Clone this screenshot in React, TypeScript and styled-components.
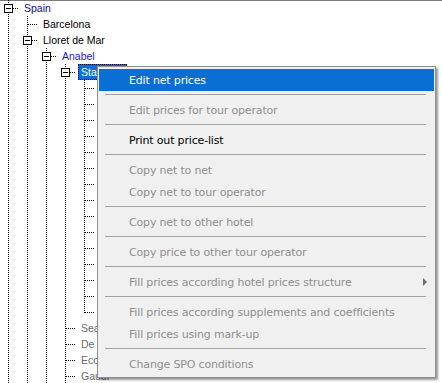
import React from 'react';
import styled, { createGlobalStyle, css } from 'styled-components';

const GlobalStyle = createGlobalStyle`
  html, body {
    margin: 0;
    padding: 0;
    background: #fff;
    overflow: hidden;
  }
`;

const Screen = styled.div`
  position: relative;
  width: 442px;
  height: 383px;
  overflow: hidden;
  background: #fff;
  box-shadow: inset 0 1px 0 #7a7a7a;
  font-family: "Liberation Sans", Arial, sans-serif;
`;

const Tree = styled.div`
  display: flex;
  flex-direction: column;
`;

const Row = styled.div`
  display: flex;
  align-items: center;
  height: 16px;
`;

const dots = (dir: 'bottom' | 'right') =>
  `repeating-linear-gradient(to ${dir}, #000 0 1px, transparent 1px 2px)`;

const Guide = styled.div<{ $line: boolean }>`
  flex: none;
  width: 19px;
  height: 16px;
  ${p => p.$line && css`
    background: ${dots('bottom')} 8px 0 / 1px 16px no-repeat;
  `}
`;

const Joint = styled.div<{ $last: boolean; $box: boolean }>`
  flex: none;
  width: 19px;
  height: 16px;
  display: flex;
  align-items: center;
  padding-left: 4px;
  box-sizing: border-box;
  background:
    ${dots('bottom')} 8px 0 / 1px ${p => (p.$last ? '9px' : '16px')} no-repeat,
    ${dots('right')} ${p => (p.$box ? '13px' : '9px')} 8px / ${p => (p.$box ? '6px' : '10px')} 1px no-repeat;
`;

const Toggle = styled.span`
  width: 9px;
  height: 9px;
  box-sizing: border-box;
  border: 1px solid #000;
  background: #fff;
  display: flex;
  align-items: center;
  justify-content: center;
  margin-top: 1px;

  &::after {
    content: '';
    width: 5px;
    height: 1px;
    background: #000;
  }
`;

const tones = {
  navy: '#10107e',
  blue: '#1c1cd2',
  black: '#000',
  gray: '#6a6a6a',
};

const Label = styled.span<{ $tone: keyof typeof tones; $selected?: boolean }>`
  margin-left: 2px;
  padding: 0 2px;
  height: 16px;
  line-height: 15px;
  box-sizing: border-box;
  font-size: 10.5px;
  white-space: nowrap;
  color: ${p => tones[p.$tone]};
  border: 1px solid transparent;
  ${p => p.$selected && css`
    background: #0a6fd4;
    color: #fff;
    border: 1px dotted #000;
  `}
`;

const Menu = styled.div`
  position: absolute;
  left: 97px;
  top: 66px;
  width: 339px;
  box-sizing: border-box;
  background: #f0f0f0;
  border: 1px solid #8e8e8e;
  padding: 2px 1px;
  box-shadow: 2px 2px 2px rgba(0, 0, 0, 0.4);
  font-family: "DejaVu Sans", sans-serif;
  font-size: 11px;
  letter-spacing: -0.17px;
`;

const Item = styled.div<{ $enabled?: boolean; $active?: boolean }>`
  display: flex;
  align-items: center;
  justify-content: space-between;
  height: 22px;
  padding: 0 7px 0 30px;
  color: ${p => (p.$enabled ? '#000' : '#8f8f8f')};
  white-space: nowrap;
  ${p => p.$active && css`
    background: #0a6fd4;
    color: #fff;
  `}
`;

const Arrow = styled.span`
  width: 0;
  height: 0;
  border-left: 4px solid #6e6e6e;
  border-top: 4px solid transparent;
  border-bottom: 4px solid transparent;
`;

const Separator = styled.div`
  height: 8px;
  display: flex;
  align-items: center;
  padding: 0 8px 0 6px;

  &::after {
    content: '';
    flex: 1;
    height: 1px;
    margin-top: -1px;
    background: #a3a3a3;
  }
`;

type TreeRow = {
  label: string;
  guides: boolean[];
  box?: boolean;
  last?: boolean;
  tone: keyof typeof tones;
  selected?: boolean;
};

const rows: TreeRow[] = [
  { label: 'Spain', guides: [], box: true, tone: 'navy' },
  { label: 'Barcelona', guides: [true], tone: 'black' },
  { label: 'Lloret de Mar', guides: [true], box: true, tone: 'black' },
  { label: 'Anabel', guides: [true, true], box: true, tone: 'blue' },
  { label: 'Standard', guides: [true, true, true], box: true, tone: 'black', selected: true },
  ...Array.from({ length: 15 }, (_, i) => ({
    label: '',
    guides: [true, true, true, true],
    last: i === 14,
    tone: 'black' as const,
  })),
  { label: 'Sea view', guides: [true, true, true], tone: 'gray' },
  { label: 'De luxe', guides: [true, true, true], tone: 'gray' },
  { label: 'Economy', guides: [true, true, true], tone: 'gray' },
  { label: 'Gaudi', guides: [true, true, true], tone: 'gray' },
];

type Entry =
  | { sep: true }
  | { text: string; enabled?: boolean; active?: boolean; submenu?: boolean };

const menu: Entry[] = [
  { text: 'Edit net prices', enabled: true, active: true },
  { sep: true },
  { text: 'Edit prices for tour operator' },
  { sep: true },
  { text: 'Print out price-list', enabled: true },
  { sep: true },
  { text: 'Copy net to net' },
  { text: 'Copy net to tour operator' },
  { sep: true },
  { text: 'Copy net to other hotel' },
  { sep: true },
  { text: 'Copy price to other tour operator' },
  { sep: true },
  { text: 'Fill prices according hotel prices structure', submenu: true },
  { sep: true },
  { text: 'Fill prices according supplements and coefficients' },
  { text: 'Fill prices using mark-up' },
  { sep: true },
  { text: 'Change SPO conditions' },
];

export default function App() {
  return (
    <Screen>
      <GlobalStyle />
      <Tree>
        {rows.map((r, i) => (
          <Row key={i}>
            {r.guides.map((g, j) => (
              <Guide key={j} $line={g} />
            ))}
            <Joint $last={!!r.last} $box={!!r.box}>
              {r.box && <Toggle />}
            </Joint>
            {r.label && (
              <Label $tone={r.tone} $selected={r.selected}>
                {r.label}
              </Label>
            )}
          </Row>
        ))}
      </Tree>

      <Menu>
        {menu.map((m, i) =>
          'sep' in m ? (
            <Separator key={i} />
          ) : (
            <Item key={i} $enabled={m.enabled} $active={m.active}>
              <span>{m.text}</span>
              {m.submenu && <Arrow />}
            </Item>
          )
        )}
      </Menu>
    </Screen>
  );
}
